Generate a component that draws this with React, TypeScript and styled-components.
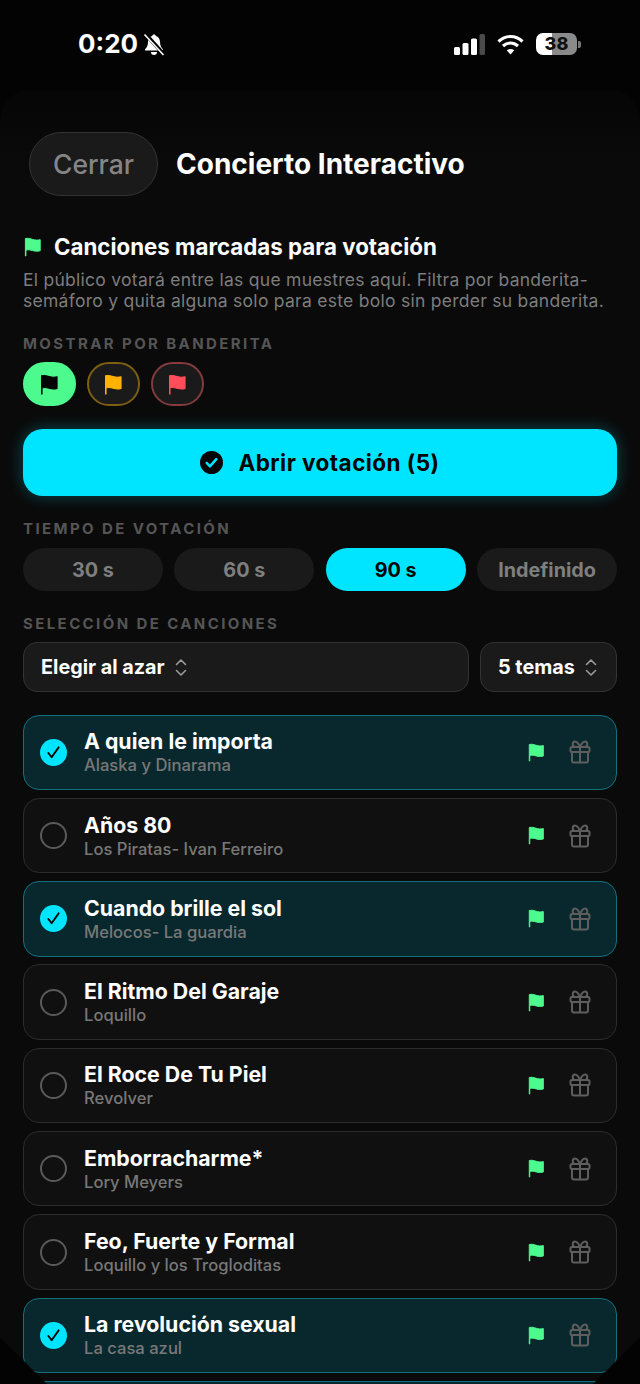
import React from "react";
import styled, { createGlobalStyle } from "styled-components";

const GlobalStyle = createGlobalStyle`
  html, body {
    margin: 0;
    padding: 0;
    background: #000;
  }
  body {
    font-family: Inter, "Noto Sans", sans-serif;
    -webkit-font-smoothing: antialiased;
  }
`;

const Screen = styled.div`
  width: 640px;
  height: 1384px;
  overflow: hidden;
  background: #030303;
`;

const StatusBar = styled.div`
  height: 90px;
  display: flex;
  align-items: center;
  justify-content: space-between;
  padding: 0 59px 2px 78px;
  box-sizing: border-box;
`;

const StatusLeft = styled.div`
  display: flex;
  align-items: center;
  gap: 4px;
`;

const Clock = styled.span`
  color: #fff;
  font-size: 26px;
  font-weight: 700;
  line-height: 30px;
`;

const StatusRight = styled.div`
  display: flex;
  align-items: center;
  gap: 12px;
`;

const BatteryWrap = styled.div`
  display: flex;
  align-items: center;
  gap: 1px;
`;

const Battery = styled.div`
  width: 41px;
  height: 22px;
  border-radius: 7px;
  background: linear-gradient(90deg, #fff 0 39%, #8a8a8a 39% 100%);
  color: #111;
  font-size: 18px;
  font-weight: 800;
  line-height: 22px;
  text-align: center;
`;

const BatteryCap = styled.div`
  width: 3px;
  height: 7px;
  border-radius: 0 2px 2px 0;
  background: #777;
`;

const Sheet = styled.div`
  height: 1294px;
  box-sizing: border-box;
  overflow: hidden;
  background: linear-gradient(#050505, #0a0a0a 70px);
  border-radius: 30px 30px 0 0;
  padding: 42px 23px 0;
  clip-path: polygon(
    0 0,
    100% 0,
    100% calc(100% - 47px),
    calc(100% - 47px) 100%,
    47px 100%,
    0 calc(100% - 47px)
  );
`;

const Header = styled.div`
  display: flex;
  align-items: center;
  gap: 18px;
  padding-left: 6px;
  margin-bottom: 38px;
`;

const CloseButton = styled.button`
  width: 129px;
  height: 64px;
  border-radius: 32px;
  border: 1px solid #333;
  background: #1a1a1a;
  color: #858585;
  font-family: inherit;
  font-size: 26.5px;
  font-weight: 500;
  padding: 0;
`;

const Title = styled.h1`
  margin: 0;
  color: #fff;
  font-size: 28px;
  font-weight: 700;
  line-height: 32px;
`;

const SectionTitle = styled.div`
  display: flex;
  align-items: center;
  gap: 11px;
  color: #fff;
  font-size: 22.3px;
  font-weight: 700;
  line-height: 26px;
`;

const Description = styled.p`
  margin: 9px 0 0;
  color: #7d7d7d;
  font-size: 17.5px;
  letter-spacing: 0.27px;
  line-height: 21px;
  white-space: nowrap;
`;

const Label = styled.div<{ $top: number }>`
  margin-top: ${(p) => p.$top}px;
  color: #555;
  font-size: 15px;
  font-weight: 700;
  letter-spacing: 2.4px;
  line-height: 18px;
`;

const FlagRow = styled.div`
  display: flex;
  gap: 11px;
  margin-top: 9px;
`;

const FlagChip = styled.button<{ $border: string; $active?: boolean }>`
  width: 53px;
  height: 44px;
  box-sizing: border-box;
  padding: 0;
  display: flex;
  align-items: center;
  justify-content: center;
  border-radius: 22px;
  border: 2px solid ${(p) => p.$border};
  background: ${(p) => (p.$active ? "#4cfa8e" : "#1a1a1a")};
`;

const PrimaryButton = styled.button`
  width: 100%;
  height: 67px;
  margin-top: 23px;
  display: flex;
  align-items: center;
  justify-content: center;
  gap: 15px;
  border: none;
  border-radius: 20px;
  background: #00e5ff;
  box-shadow: 0 0 16px rgba(0, 229, 255, 0.3);
  color: #050505;
  font-family: inherit;
  font-size: 22.5px;
  font-weight: 700;
  letter-spacing: 0.45px;
`;

const PillRow = styled.div`
  display: grid;
  grid-template-columns: repeat(4, 1fr);
  gap: 11.5px;
  margin-top: 10px;
`;

const Pill = styled.button<{ $active?: boolean }>`
  height: 43px;
  padding: 0;
  border: none;
  border-radius: 21.5px;
  background: ${(p) => (p.$active ? "#00e5ff" : "#1a1a1a")};
  color: ${(p) => (p.$active ? "#050505" : "#7f7f7f")};
  font-family: inherit;
  font-size: 19.8px;
  font-weight: 700;
`;

const SelectRow = styled.div`
  display: flex;
  gap: 11px;
  margin-top: 9px;
`;

const Select = styled.div<{ $grow?: boolean }>`
  flex: ${(p) => (p.$grow ? "1" : "0 0 137px")};
  height: 50px;
  box-sizing: border-box;
  display: flex;
  align-items: center;
  gap: 10px;
  padding: 0 17px;
  border-radius: 14px;
  border: 1.5px solid #333;
  background: #1a1a1a;
  color: #fff;
  font-size: 19.8px;
  font-weight: 700;
  white-space: nowrap;
`;

const SongList = styled.div`
  display: flex;
  flex-direction: column;
  gap: 7.8px;
  margin-top: 22.5px;
`;

const SongCard = styled.div<{ $selected?: boolean }>`
  flex: none;
  height: 75.5px;
  box-sizing: border-box;
  display: flex;
  align-items: center;
  padding: 0 25px 0 16px;
  border-radius: 16px;
  border: 1.5px solid ${(p) => (p.$selected ? "#12707c" : "#2c2c2c")};
  background: ${(p) => (p.$selected ? "#08282e" : "#101010")};
`;

const Radio = styled.div<{ $selected?: boolean }>`
  width: 27px;
  height: 27px;
  box-sizing: border-box;
  flex: none;
  display: flex;
  align-items: center;
  justify-content: center;
  border-radius: 50%;
  border: ${(p) => (p.$selected ? "none" : "2.5px solid #5a5a5a")};
  background: ${(p) => (p.$selected ? "#00e5ff" : "transparent")};
`;

const SongText = styled.div`
  flex: 1;
  margin-left: 17px;
  min-width: 0;
  padding-bottom: 1px;
`;

const SongName = styled.div`
  color: #fff;
  font-size: 21.3px;
  font-weight: 700;
  line-height: 26px;
`;

const SongArtist = styled.div`
  margin-top: 1px;
  color: #787878;
  font-size: 16.6px;
  font-weight: 500;
  line-height: 20px;
`;

const SongActions = styled.div`
  display: flex;
  align-items: center;
  gap: 23px;
`;

function Flag({ color, size = 20 }: { color: string; size?: number }) {
  return (
    <svg width={size} height={size} viewBox="0 0 20 20" fill="none">
      <path
        d="M2.4 1.6C5 .9 7.4 1.7 9.6 2.4c2.300.7 4.700 1 7.600.3v11c-2.600.8-5.100.6-7.500-.1-2.300-.7-4.600-1.100-6.800-.4V19H2.400z"
        fill={color}
        stroke={color}
        strokeWidth="1"
        strokeLinejoin="round"
      />
    </svg>
  );
}

function CheckCircle() {
  return (
    <svg width="23" height="23" viewBox="0 0 24 24">
      <circle cx="12" cy="12" r="12" fill="#050505" />
      <path d="M7 12.500l3.400 3.600L17 8.500" fill="none" stroke="#00e5ff" strokeWidth="2.600" strokeLinecap="round" strokeLinejoin="round" />
    </svg>
  );
}

function Chevrons() {
  return (
    <svg width="12" height="19" viewBox="0 0 12 19" fill="none" stroke="#9a9a9a" strokeWidth="1.600" strokeLinecap="round" strokeLinejoin="round">
      <path d="M1.500 6.500L6 2l4.500 4.500" />
      <path d="M1.500 12.500L6 17l4.500-4.500" />
    </svg>
  );
}

function Gift() {
  return (
    <svg width="22" height="24" viewBox="0 0 22 24" fill="none" stroke="#5e5e5e" strokeWidth="2" strokeLinejoin="round">
      <rect x="1.500" y="7" width="19" height="5" rx="1.500" />
      <path d="M3 12v8.500a2 2 0 0 0 2 2h12a2 2 0 0 0 2-2V12" />
      <path d="M11 7v15.500" />
      <path d="M11 7C9.500 3.500 8 1.500 6 1.500c-3 0-3 5.500 0 5.500z" />
      <path d="M11 7c1.500-3.500 3-5.500 5-5.500 3 0 3 5.500 0 5.500z" />
    </svg>
  );
}

function SilentBell() {
  return (
    <svg width="24" height="24" viewBox="0 0 24 24">
      <path d="M12 2.500c-1 0-1.700.7-1.900 1.500C7.500 4.800 6 7 6 10c0 3.500-1.200 5.500-3 7.300V18.500h18v-1.200C19.200 15.500 18 13.500 18 10c0-3-1.500-5.200-4.100-6-.2-.8-.9-1.500-1.900-1.500z" fill="#fff" />
      <path d="M9 20h6a3 3 0 0 1-6 0z" fill="#fff" />
      <path d="M3 1.500L22 22.500" stroke="#030303" strokeWidth="4" />
      <path d="M2.500 2.500L21.500 23" stroke="#fff" strokeWidth="1.600" />
    </svg>
  );
}

function Signal() {
  return (
    <svg width="31" height="21" viewBox="0 0 31 21">
      <rect x="0" y="13" width="6" height="8" rx="1.500" fill="#fff" />
      <rect x="8.500" y="9" width="6" height="12" rx="1.500" fill="#fff" />
      <rect x="17" y="4.500" width="6" height="16.500" rx="1.500" fill="#fff" />
      <rect x="25.500" y="0" width="5.500" height="21" rx="1.500" fill="#4a4a4a" />
    </svg>
  );
}

function Wifi() {
  return (
    <svg width="27" height="21" viewBox="0 0 27 21" fill="none" stroke="#fff" strokeWidth="3.200">
      <path d="M1.500 7.500C8.500.8 18.500.8 25.500 7.500" />
      <path d="M6 12c4.500-4 10.500-4 15 0" />
      <path d="M13.500 20.500l-3.800-4.300c2.300-1.700 5.300-1.700 7.600 0z" fill="#fff" stroke="none" />
    </svg>
  );
}

const songs = [
  { name: "A quien le importa", artist: "Alaska y Dinarama", selected: true },
  { name: "Años 80", artist: "Los Piratas- Ivan Ferreiro" },
  { name: "Cuando brille el sol", artist: "Melocos- La guardia", selected: true },
  { name: "El Ritmo Del Garaje", artist: "Loquillo" },
  { name: "El Roce De Tu Piel", artist: "Revolver" },
  { name: "Emborracharme*", artist: "Lory Meyers" },
  { name: "Feo, Fuerte y Formal", artist: "Loquillo y los Trogloditas" },
  { name: "La revolución sexual", artist: "La casa azul", selected: true },
];

export default function App() {
  return (
    <Screen>
      <GlobalStyle />
      <StatusBar>
        <StatusLeft>
          <Clock>0:20</Clock>
          <SilentBell />
        </StatusLeft>
        <StatusRight>
          <Signal />
          <Wifi />
          <BatteryWrap>
            <Battery>38</Battery>
            <BatteryCap />
          </BatteryWrap>
        </StatusRight>
      </StatusBar>
      <Sheet>
        <Header>
          <CloseButton>Cerrar</CloseButton>
          <Title>Concierto Interactivo</Title>
        </Header>
        <SectionTitle>
          <Flag color="#4cfa8e" />
          Canciones marcadas para votación
        </SectionTitle>
        <Description>
          El público votará entre las que muestres aquí. Filtra por banderita-
          <br />
          semáforo y quita alguna solo para este bolo sin perder su banderita.
        </Description>
        <Label $top={24}>MOSTRAR POR BANDERITA</Label>
        <FlagRow>
          <FlagChip $border="#4cfa8e" $active>
            <Flag color="#050505" size={21} />
          </FlagChip>
          <FlagChip $border="#7d5f14">
            <Flag color="#ffb300" size={21} />
          </FlagChip>
          <FlagChip $border="#843a3e">
            <Flag color="#ff4d5a" size={21} />
          </FlagChip>
        </FlagRow>
        <PrimaryButton>
          <CheckCircle />
          Abrir votación (5)
        </PrimaryButton>
        <Label $top={24}>TIEMPO DE VOTACIÓN</Label>
        <PillRow>
          <Pill>30 s</Pill>
          <Pill>60 s</Pill>
          <Pill $active>90 s</Pill>
          <Pill>Indefinido</Pill>
        </PillRow>
        <Label $top={24}>SELECCIÓN DE CANCIONES</Label>
        <SelectRow>
          <Select $grow>
            Elegir al azar
            <Chevrons />
          </Select>
          <Select>
            5 temas
            <Chevrons />
          </Select>
        </SelectRow>
        <SongList>
          {songs.map((song) => (
            <SongCard key={song.name} $selected={song.selected}>
              <Radio $selected={song.selected}>
                {song.selected && (
                  <svg width="15" height="15" viewBox="0 0 16 16" fill="none" stroke="#050505" strokeWidth="2" strokeLinecap="round" strokeLinejoin="round">
                    <path d="M2.500 8.500l3.500 4.500L13.500 2.500" />
                  </svg>
                )}
              </Radio>
              <SongText>
                <SongName>{song.name}</SongName>
                <SongArtist>{song.artist}</SongArtist>
              </SongText>
              <SongActions>
                <Flag color="#4cfa8e" size={19} />
                <Gift />
              </SongActions>
            </SongCard>
          ))}
          <SongCard $selected />
        </SongList>
      </Sheet>
    </Screen>
  );
}
